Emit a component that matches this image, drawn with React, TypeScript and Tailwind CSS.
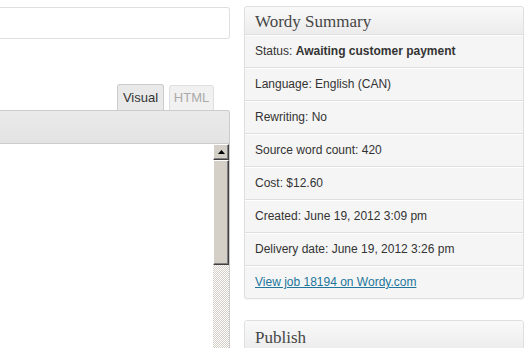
const rows: { label: string; value?: string; bold?: boolean }[] = [
  { label: "Status: ", value: "Awaiting customer payment", bold: true },
  { label: "Language: English (CAN)" },
  { label: "Rewriting: No" },
  { label: "Source word count: 420" },
  { label: "Cost: $12.60" },
  { label: "Created: June 19, 2012 3:09 pm" },
  { label: "Delivery date: June 19, 2012 3:26 pm" },
];

const Scrollbar = () => (
  <div className="flex w-[16px] flex-col">
    <div className="flex h-[16px] items-center justify-center border border-t-white border-l-white border-r-[#404040] border-b-[#404040] bg-[#d4d0c8] shadow-[inset_-1px_-1px_0_#808080]">
      <svg width="7" height="4" viewBox="0 0 7 4">
        <path d="M3.5 0 L7 4 L0 4 Z" fill="#000" />
      </svg>
    </div>
    <div className="h-[105px] border border-t-white border-l-white border-r-[#404040] border-b-[#404040] bg-[#d4d0c8] shadow-[inset_-1px_-1px_0_#808080]" />
    <div className="flex-1 bg-[image:repeating-conic-gradient(#d4d0c8_0_25%,#ffffff_0_50%)] bg-[length:2px_2px]" />
  </div>
);

const App = () => {
  return (
    <div className="flex h-[348px] w-[530px] overflow-hidden bg-white font-['Liberation_Sans',Arial,sans-serif] text-[12px] text-[#333]">
      {/* left column: title + editor */}
      <div className="flex w-[230px] flex-col pt-[7px]">
        <div className="h-[32px] rounded-r-[3px] border border-l-0 border-[#dfdfdf] bg-white" />
        <div className="flex h-[71px] items-end justify-end gap-[5px] pr-[16px]">
          <div className="flex h-[26px] w-[47px] items-center justify-center rounded-t-[3px] border border-b-0 border-[#ccc] bg-[#e9e9e9] pt-[1px] text-[13px] text-[#333]">
            Visual
          </div>
          <div className="flex h-[25px] w-[45px] items-center justify-center rounded-t-[3px] border border-b-0 border-[#dfdfdf] bg-[#f1f1f1] text-[13px] text-[#aaa]">
            HTML
          </div>
        </div>
        <div className="h-[34px] rounded-tr-[3px] border border-l-0 border-[#ccc] bg-gradient-to-b from-[#eaeaea] to-[#e3e3e3]" />
        <div className="flex flex-1 justify-end border-r border-[#ccc] bg-white">
          <Scrollbar />
        </div>
      </div>

      {/* right column: meta boxes */}
      <div className="ml-[14px] flex w-[280px] flex-col pt-[6px]">
        <div className="rounded-[3px] border border-[#dfdfdf] bg-[#f5f5f5] shadow-[0_1px_1px_rgba(0,0,0,0.04)]">
          <div className="flex h-[28px] items-center rounded-t-[3px] border-b border-[#dfdfdf] bg-gradient-to-b from-[#f9f9f9] to-[#ececec] px-[10px] pt-[3px] font-['Liberation_Serif',Georgia,serif] text-[17px] text-[#464646]">
            Wordy Summary
          </div>
          {rows.map((r) => (
            <div
              key={r.label}
              className="h-[33px] border-t border-t-white border-b border-b-[#dfdfdf] px-[10px] leading-[31px]"
            >
              {r.label}
              {r.value && <span className={r.bold ? "font-bold" : ""}>{r.value}</span>}
            </div>
          ))}
          <div className="h-[32px] border-t border-white px-[10px] leading-[30px]">
            <a href="#" className="text-[#21759b] underline">
              View job 18194 on Wordy.com
            </a>
          </div>
        </div>

        <div className="mt-[21px] rounded-t-[3px] border border-[#dfdfdf]">
          <div className="flex h-[30px] items-center rounded-t-[3px] bg-gradient-to-b from-[#f9f9f9] to-[#ececec] px-[10px] pt-[3px] font-['Liberation_Serif',Georgia,serif] text-[17px] text-[#464646]">
            Publish
          </div>
        </div>
      </div>
    </div>
  );
};

export default App;
